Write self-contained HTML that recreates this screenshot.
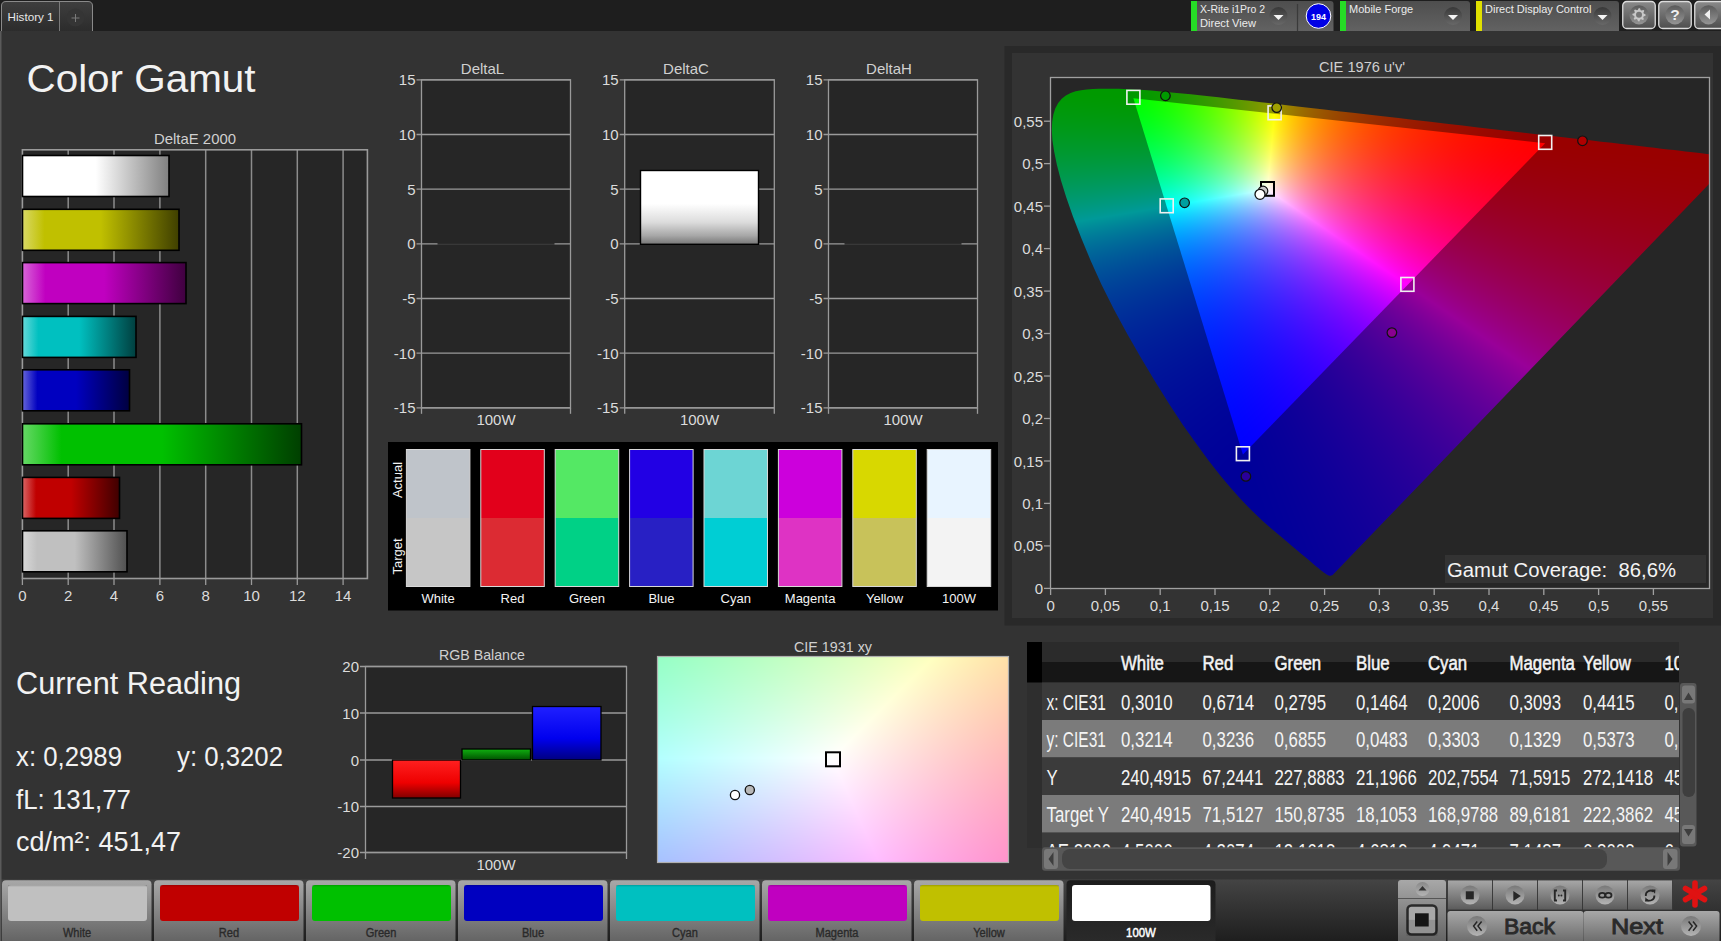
<!DOCTYPE html>
<html><head><meta charset="utf-8"><style>
html,body{margin:0;padding:0;width:1721px;height:941px;overflow:hidden;background:#333;}
svg{position:absolute;left:0;top:0;font-family:"Liberation Sans", sans-serif;}
canvas{position:absolute;}
</style></head><body>
<svg width="1721" height="941" viewBox="0 0 1721 941" style="z-index:0"><defs>
<linearGradient id="fb_out" x1="0" y1="0" x2="1" y2="0.3"><stop offset="0" stop-color="#009a30"/><stop offset="0.45" stop-color="#30009a"/><stop offset="1" stop-color="#990000"/></linearGradient>
<linearGradient id="fb_in" x1="0" y1="0" x2="0.6" y2="1"><stop offset="0" stop-color="#00ff00"/><stop offset="0.3" stop-color="#ffff00"/><stop offset="0.55" stop-color="#ff00ff"/><stop offset="1" stop-color="#0000ff"/></linearGradient>
<radialGradient id="fb_w" cx="0.45" cy="0.3" r="0.45"><stop offset="0" stop-color="#fff" stop-opacity="1"/><stop offset="1" stop-color="#fff" stop-opacity="0"/></radialGradient>
<linearGradient id="fb_xy" x1="0" y1="0" x2="1" y2="1"><stop offset="0" stop-color="#90ffc8"/><stop offset="0.5" stop-color="#fafaff"/><stop offset="1" stop-color="#ff9cc8"/></linearGradient>
<linearGradient id="tabg" x1="0" y1="0" x2="0" y2="1"><stop offset="0" stop-color="#3e3e3e"/><stop offset="1" stop-color="#2c2c2c"/></linearGradient>
<linearGradient id="devg" x1="0" y1="0" x2="0" y2="1"><stop offset="0" stop-color="#4e4e4e"/><stop offset="1" stop-color="#626262"/></linearGradient>
<linearGradient id="ddg" x1="0" y1="0" x2="0" y2="1"><stop offset="0" stop-color="#383838"/><stop offset="1" stop-color="#686868"/></linearGradient>
<linearGradient id="btng" x1="0" y1="0" x2="0" y2="1"><stop offset="0" stop-color="#8a8a8a"/><stop offset="1" stop-color="#4e4e4e"/></linearGradient>
<linearGradient id="ddg2" x1="0" y1="0" x2="0" y2="1"><stop offset="0" stop-color="#5a5a5a"/><stop offset="1" stop-color="#959595"/></linearGradient>
<linearGradient id="ddg3" x1="0" y1="0" x2="0" y2="1"><stop offset="0" stop-color="#787878"/><stop offset="1" stop-color="#b4b4b4"/></linearGradient>
<linearGradient id="ddg4" x1="0" y1="0" x2="0" y2="1"><stop offset="0" stop-color="#888"/><stop offset="1" stop-color="#b4b4b4"/></linearGradient>
<linearGradient id="botbg" x1="0" y1="0" x2="0" y2="1"><stop offset="0" stop-color="#444"/><stop offset="1" stop-color="#1e1e1e"/></linearGradient>
<linearGradient id="selbg" x1="0" y1="0" x2="0" y2="1"><stop offset="0" stop-color="#1c1c1c"/><stop offset="1" stop-color="#2c2c2c"/></linearGradient>
<linearGradient id="bbg" x1="0" y1="0" x2="0" y2="1"><stop offset="0" stop-color="#a8a8a8"/><stop offset="1" stop-color="#5a5a5a"/></linearGradient>
<linearGradient id="dcg" x1="0" y1="0" x2="0" y2="1"><stop offset="0" stop-color="#fff"/><stop offset="0.45" stop-color="#fff"/><stop offset="0.7" stop-color="#dcdcdc"/><stop offset="0.88" stop-color="#a8a8a8"/><stop offset="1" stop-color="#767676"/></linearGradient>
<linearGradient id="rb_r" x1="0" y1="0" x2="0" y2="1"><stop offset="0" stop-color="#ff2020"/><stop offset="0.6" stop-color="#ee0000"/><stop offset="1" stop-color="#800000"/></linearGradient>
<linearGradient id="rb_g" x1="0" y1="0" x2="0" y2="1"><stop offset="0" stop-color="#10b010"/><stop offset="1" stop-color="#005000"/></linearGradient>
<linearGradient id="rb_b" x1="0" y1="0" x2="0" y2="1"><stop offset="0" stop-color="#2020ff"/><stop offset="0.6" stop-color="#0000ee"/><stop offset="1" stop-color="#000080"/></linearGradient>
<linearGradient id="bar_w" x1="0" y1="0" x2="1" y2="0"><stop offset="0" stop-color="#ffffff"/><stop offset="0.14" stop-color="#ffffff"/><stop offset="0.5" stop-color="#ffffff"/><stop offset="1" stop-color="#808080"/></linearGradient>
<linearGradient id="bar_y" x1="0" y1="0" x2="1" y2="0"><stop offset="0" stop-color="#d9d966"/><stop offset="0.14" stop-color="#c0c000"/><stop offset="0.5" stop-color="#c0c000"/><stop offset="1" stop-color="#3f3f00"/></linearGradient>
<linearGradient id="bar_m" x1="0" y1="0" x2="1" y2="0"><stop offset="0" stop-color="#d966d9"/><stop offset="0.14" stop-color="#c000c0"/><stop offset="0.5" stop-color="#c000c0"/><stop offset="1" stop-color="#3f003f"/></linearGradient>
<linearGradient id="bar_c" x1="0" y1="0" x2="1" y2="0"><stop offset="0" stop-color="#66d9d9"/><stop offset="0.14" stop-color="#00c0c0"/><stop offset="0.5" stop-color="#00c0c0"/><stop offset="1" stop-color="#003f3f"/></linearGradient>
<linearGradient id="bar_b" x1="0" y1="0" x2="1" y2="0"><stop offset="0" stop-color="#6666d9"/><stop offset="0.14" stop-color="#0000c0"/><stop offset="0.5" stop-color="#0000c0"/><stop offset="1" stop-color="#00003f"/></linearGradient>
<linearGradient id="bar_g" x1="0" y1="0" x2="1" y2="0"><stop offset="0" stop-color="#66d966"/><stop offset="0.14" stop-color="#00c000"/><stop offset="0.5" stop-color="#00c000"/><stop offset="1" stop-color="#003f00"/></linearGradient>
<linearGradient id="bar_r" x1="0" y1="0" x2="1" y2="0"><stop offset="0" stop-color="#d96666"/><stop offset="0.14" stop-color="#c00000"/><stop offset="0.5" stop-color="#c00000"/><stop offset="1" stop-color="#3f0000"/></linearGradient>
<linearGradient id="bar_k" x1="0" y1="0" x2="1" y2="0"><stop offset="0" stop-color="#d9d9d9"/><stop offset="0.14" stop-color="#c0c0c0"/><stop offset="0.5" stop-color="#c0c0c0"/><stop offset="1" stop-color="#505050"/></linearGradient>
</defs><rect x="0" y="0" width="1721" height="31" fill="#1e1e1e"/><rect x="0" y="31" width="1721" height="848" fill="#333"/><path d="M1.5 31 V6 Q1.5 1.5 6 1.5 H88 Q92.5 1.5 92.5 6 V31" fill="url(#tabg)" stroke="#8a8a8a" stroke-width="1"/><line x1="59.5" y1="2" x2="59.5" y2="31" stroke="#7a7a7a" stroke-width="1"/><text x="7.6" y="21.3" font-size="11.5" fill="#e8e8e8" textLength="46" lengthAdjust="spacingAndGlyphs">History 1</text><circle cx="75.5" cy="17.5" r="9" fill="#353535"/><path d="M71.5 18 H79.5 M75.5 14 V22" stroke="#7a7a7a" stroke-width="1"/><path d="M1191 31 V1 H1330.5 Q1333.5 1 1333.5 4 V31 Z" fill="url(#devg)"/><rect x="1191" y="1" width="6" height="30" fill="#26dc26"/><text x="1200" y="12.5" font-size="11" fill="#ececec" textLength="65" lengthAdjust="spacingAndGlyphs">X-Rite i1Pro 2</text><text x="1200" y="26.5" font-size="11" fill="#ececec" textLength="56" lengthAdjust="spacingAndGlyphs">Direct View</text><circle cx="1278.5" cy="16" r="9" fill="url(#ddg)"/><path d="M1273.5 15 H1283.5 L1278.5 20 Z" fill="#f4f4f4"/><line x1="1297.5" y1="4" x2="1297.5" y2="31" stroke="#3a3a3a" stroke-width="1.2"/><circle cx="1318.5" cy="16" r="12.3" fill="#0000e6" stroke="#fff" stroke-width="1"/><text x="1318.5" y="19.5" font-size="9" fill="#fff" text-anchor="middle" font-weight="bold">194</text><path d="M1340 31 V1 H1467 Q1470 1 1470 4 V31 Z" fill="url(#devg)"/><rect x="1340" y="1" width="6" height="30" fill="#26dc26"/><text x="1349" y="12.5" font-size="11" fill="#ececec">Mobile Forge</text><circle cx="1453" cy="16" r="9" fill="url(#ddg)"/><path d="M1448 15 H1458 L1453 20 Z" fill="#f4f4f4"/><path d="M1476 31 V1 H1616 Q1619 1 1619 4 V31 Z" fill="url(#devg)"/><rect x="1476" y="1" width="6" height="30" fill="#e0e000"/><text x="1485" y="12.5" font-size="11" fill="#ececec">Direct Display Control</text><circle cx="1602.5" cy="16" r="9" fill="url(#ddg)"/><path d="M1597.5 15 H1607.5 L1602.5 20 Z" fill="#f4f4f4"/><rect x="1622.75" y="1.5" width="32.5" height="27" rx="4" fill="url(#btng)" stroke="#dcdcdc" stroke-width="1.3"/><circle cx="1639.0" cy="14.8" r="9.6" fill="url(#ddg2)"/><polygon points="1645.59,14.48 1645.53,15.77 1643.61,16.45 1643.20,17.32 1643.89,19.23 1642.93,20.10 1641.10,19.23 1640.19,19.55 1639.32,21.39 1638.03,21.33 1637.35,19.41 1636.48,19.00 1634.57,19.69 1633.70,18.73 1634.57,16.90 1634.25,15.99 1632.41,15.12 1632.47,13.83 1634.39,13.15 1634.80,12.28 1634.11,10.37 1635.07,9.50 1636.90,10.37 1637.81,10.05 1638.68,8.21 1639.97,8.27 1640.65,10.19 1641.52,10.60 1643.43,9.91 1644.30,10.87 1643.43,12.70 1643.75,13.61" fill="#c8c8c8"/><circle cx="1639.0" cy="14.8" r="3" fill="#767676"/><rect x="1658.75" y="1.5" width="32.5" height="27" rx="4" fill="url(#btng)" stroke="#dcdcdc" stroke-width="1.3"/><circle cx="1675.0" cy="14.8" r="9.6" fill="url(#ddg2)"/><text x="1675.0" y="20.3" font-size="15.5" font-weight="bold" fill="#f0f0f0" text-anchor="middle">?</text><rect x="1694.75" y="1.5" width="40" height="27" rx="4" fill="url(#btng)" stroke="#dcdcdc" stroke-width="1.3"/><circle cx="1708.5" cy="14.8" r="9.6" fill="url(#ddg2)"/><path d="M1704.5 14.5 L1710 9.5 V19.5 Z" fill="#f0f0f0"/><text x="26.5" y="92" font-size="38" fill="#f2f2f2" textLength="229" lengthAdjust="spacingAndGlyphs">Color Gamut</text><text x="195" y="144" font-size="15" fill="#d0d0d0" text-anchor="middle" textLength="82" lengthAdjust="spacingAndGlyphs">DeltaE 2000</text><rect x="22.4" y="149.8" width="345" height="428.7" fill="#262626"/><line x1="68.2" y1="149.8" x2="68.2" y2="578.5" stroke="#8c8c8c" stroke-width="1.5"/><line x1="114.0" y1="149.8" x2="114.0" y2="578.5" stroke="#8c8c8c" stroke-width="1.5"/><line x1="159.9" y1="149.8" x2="159.9" y2="578.5" stroke="#8c8c8c" stroke-width="1.5"/><line x1="205.7" y1="149.8" x2="205.7" y2="578.5" stroke="#8c8c8c" stroke-width="1.5"/><line x1="251.5" y1="149.8" x2="251.5" y2="578.5" stroke="#8c8c8c" stroke-width="1.5"/><line x1="297.3" y1="149.8" x2="297.3" y2="578.5" stroke="#8c8c8c" stroke-width="1.5"/><line x1="343.1" y1="149.8" x2="343.1" y2="578.5" stroke="#8c8c8c" stroke-width="1.5"/><rect x="22.4" y="149.8" width="345" height="428.7" fill="none" stroke="#9a9a9a" stroke-width="1.6"/><line x1="22.4" y1="578.5" x2="22.4" y2="585" stroke="#9a9a9a" stroke-width="1.3"/><text x="22.4" y="601" font-size="15" fill="#dcdcdc" text-anchor="middle">0</text><line x1="68.2" y1="578.5" x2="68.2" y2="585" stroke="#9a9a9a" stroke-width="1.3"/><text x="68.2" y="601" font-size="15" fill="#dcdcdc" text-anchor="middle">2</text><line x1="114.0" y1="578.5" x2="114.0" y2="585" stroke="#9a9a9a" stroke-width="1.3"/><text x="114.0" y="601" font-size="15" fill="#dcdcdc" text-anchor="middle">4</text><line x1="159.9" y1="578.5" x2="159.9" y2="585" stroke="#9a9a9a" stroke-width="1.3"/><text x="159.9" y="601" font-size="15" fill="#dcdcdc" text-anchor="middle">6</text><line x1="205.7" y1="578.5" x2="205.7" y2="585" stroke="#9a9a9a" stroke-width="1.3"/><text x="205.7" y="601" font-size="15" fill="#dcdcdc" text-anchor="middle">8</text><line x1="251.5" y1="578.5" x2="251.5" y2="585" stroke="#9a9a9a" stroke-width="1.3"/><text x="251.5" y="601" font-size="15" fill="#dcdcdc" text-anchor="middle">10</text><line x1="297.3" y1="578.5" x2="297.3" y2="585" stroke="#9a9a9a" stroke-width="1.3"/><text x="297.3" y="601" font-size="15" fill="#dcdcdc" text-anchor="middle">12</text><line x1="343.1" y1="578.5" x2="343.1" y2="585" stroke="#9a9a9a" stroke-width="1.3"/><text x="343.1" y="601" font-size="15" fill="#dcdcdc" text-anchor="middle">14</text><rect x="22.5" y="155.5" width="146.5" height="41" fill="url(#bar_w)" stroke="#000" stroke-width="1.6"/><rect x="22.5" y="209.3" width="156.5" height="41" fill="url(#bar_y)" stroke="#000" stroke-width="1.6"/><rect x="22.5" y="262.6" width="163.5" height="41" fill="url(#bar_m)" stroke="#000" stroke-width="1.6"/><rect x="22.5" y="316.4" width="113.5" height="41" fill="url(#bar_c)" stroke="#000" stroke-width="1.6"/><rect x="22.5" y="369.8" width="107.0" height="41" fill="url(#bar_b)" stroke="#000" stroke-width="1.6"/><rect x="22.5" y="423.8" width="279.0" height="41" fill="url(#bar_g)" stroke="#000" stroke-width="1.6"/><rect x="22.5" y="477.4" width="97.0" height="41" fill="url(#bar_r)" stroke="#000" stroke-width="1.6"/><rect x="22.5" y="530.8" width="104.5" height="41" fill="url(#bar_k)" stroke="#000" stroke-width="1.6"/><text x="482.5" y="73.5" font-size="15" fill="#d0d0d0" text-anchor="middle">DeltaL</text><rect x="421.5" y="79.8" width="149.0" height="328.0" fill="#262626"/><line x1="416.5" y1="79.8" x2="570.5" y2="79.8" stroke="#9a9a9a" stroke-width="1.3"/><text x="415.5" y="85.3" font-size="15" fill="#dcdcdc" text-anchor="end">15</text><line x1="416.5" y1="134.5" x2="570.5" y2="134.5" stroke="#9a9a9a" stroke-width="1.3"/><text x="415.5" y="140.0" font-size="15" fill="#dcdcdc" text-anchor="end">10</text><line x1="416.5" y1="189.1" x2="570.5" y2="189.1" stroke="#9a9a9a" stroke-width="1.3"/><text x="415.5" y="194.6" font-size="15" fill="#dcdcdc" text-anchor="end">5</text><line x1="416.5" y1="243.8" x2="570.5" y2="243.8" stroke="#9a9a9a" stroke-width="1.3"/><text x="415.5" y="249.3" font-size="15" fill="#dcdcdc" text-anchor="end">0</text><line x1="416.5" y1="298.5" x2="570.5" y2="298.5" stroke="#9a9a9a" stroke-width="1.3"/><text x="415.5" y="304.0" font-size="15" fill="#dcdcdc" text-anchor="end">-5</text><line x1="416.5" y1="353.2" x2="570.5" y2="353.2" stroke="#9a9a9a" stroke-width="1.3"/><text x="415.5" y="358.7" font-size="15" fill="#dcdcdc" text-anchor="end">-10</text><line x1="416.5" y1="407.8" x2="570.5" y2="407.8" stroke="#9a9a9a" stroke-width="1.3"/><text x="415.5" y="413.3" font-size="15" fill="#dcdcdc" text-anchor="end">-15</text><rect x="421.5" y="79.8" width="149.0" height="328.0" fill="none" stroke="#9a9a9a" stroke-width="1.3"/><line x1="421.5" y1="407.82" x2="421.5" y2="413.82" stroke="#9a9a9a" stroke-width="1.3"/><line x1="570.5" y1="407.82" x2="570.5" y2="413.82" stroke="#9a9a9a" stroke-width="1.3"/><text x="496.0" y="425" font-size="15" fill="#dcdcdc" text-anchor="middle">100W</text><line x1="437.5" y1="243.8" x2="554.5" y2="243.8" stroke="#111" stroke-width="1.3"/><text x="686" y="73.5" font-size="15" fill="#d0d0d0" text-anchor="middle">DeltaC</text><rect x="624.7" y="79.8" width="149.5999999999999" height="328.0" fill="#262626"/><line x1="619.7" y1="79.8" x2="774.3" y2="79.8" stroke="#9a9a9a" stroke-width="1.3"/><text x="618.7" y="85.3" font-size="15" fill="#dcdcdc" text-anchor="end">15</text><line x1="619.7" y1="134.5" x2="774.3" y2="134.5" stroke="#9a9a9a" stroke-width="1.3"/><text x="618.7" y="140.0" font-size="15" fill="#dcdcdc" text-anchor="end">10</text><line x1="619.7" y1="189.1" x2="774.3" y2="189.1" stroke="#9a9a9a" stroke-width="1.3"/><text x="618.7" y="194.6" font-size="15" fill="#dcdcdc" text-anchor="end">5</text><line x1="619.7" y1="243.8" x2="774.3" y2="243.8" stroke="#9a9a9a" stroke-width="1.3"/><text x="618.7" y="249.3" font-size="15" fill="#dcdcdc" text-anchor="end">0</text><line x1="619.7" y1="298.5" x2="774.3" y2="298.5" stroke="#9a9a9a" stroke-width="1.3"/><text x="618.7" y="304.0" font-size="15" fill="#dcdcdc" text-anchor="end">-5</text><line x1="619.7" y1="353.2" x2="774.3" y2="353.2" stroke="#9a9a9a" stroke-width="1.3"/><text x="618.7" y="358.7" font-size="15" fill="#dcdcdc" text-anchor="end">-10</text><line x1="619.7" y1="407.8" x2="774.3" y2="407.8" stroke="#9a9a9a" stroke-width="1.3"/><text x="618.7" y="413.3" font-size="15" fill="#dcdcdc" text-anchor="end">-15</text><rect x="624.7" y="79.8" width="149.5999999999999" height="328.0" fill="none" stroke="#9a9a9a" stroke-width="1.3"/><line x1="624.7" y1="407.82" x2="624.7" y2="413.82" stroke="#9a9a9a" stroke-width="1.3"/><line x1="774.3" y1="407.82" x2="774.3" y2="413.82" stroke="#9a9a9a" stroke-width="1.3"/><text x="699.5" y="425" font-size="15" fill="#dcdcdc" text-anchor="middle">100W</text><rect x="640.5" y="170.5" width="118" height="73.8" fill="url(#dcg)" stroke="#000" stroke-width="1.4"/><text x="889" y="73.5" font-size="15" fill="#d0d0d0" text-anchor="middle">DeltaH</text><rect x="828.5" y="79.8" width="149.0" height="328.0" fill="#262626"/><line x1="823.5" y1="79.8" x2="977.5" y2="79.8" stroke="#9a9a9a" stroke-width="1.3"/><text x="822.5" y="85.3" font-size="15" fill="#dcdcdc" text-anchor="end">15</text><line x1="823.5" y1="134.5" x2="977.5" y2="134.5" stroke="#9a9a9a" stroke-width="1.3"/><text x="822.5" y="140.0" font-size="15" fill="#dcdcdc" text-anchor="end">10</text><line x1="823.5" y1="189.1" x2="977.5" y2="189.1" stroke="#9a9a9a" stroke-width="1.3"/><text x="822.5" y="194.6" font-size="15" fill="#dcdcdc" text-anchor="end">5</text><line x1="823.5" y1="243.8" x2="977.5" y2="243.8" stroke="#9a9a9a" stroke-width="1.3"/><text x="822.5" y="249.3" font-size="15" fill="#dcdcdc" text-anchor="end">0</text><line x1="823.5" y1="298.5" x2="977.5" y2="298.5" stroke="#9a9a9a" stroke-width="1.3"/><text x="822.5" y="304.0" font-size="15" fill="#dcdcdc" text-anchor="end">-5</text><line x1="823.5" y1="353.2" x2="977.5" y2="353.2" stroke="#9a9a9a" stroke-width="1.3"/><text x="822.5" y="358.7" font-size="15" fill="#dcdcdc" text-anchor="end">-10</text><line x1="823.5" y1="407.8" x2="977.5" y2="407.8" stroke="#9a9a9a" stroke-width="1.3"/><text x="822.5" y="413.3" font-size="15" fill="#dcdcdc" text-anchor="end">-15</text><rect x="828.5" y="79.8" width="149.0" height="328.0" fill="none" stroke="#9a9a9a" stroke-width="1.3"/><line x1="828.5" y1="407.82" x2="828.5" y2="413.82" stroke="#9a9a9a" stroke-width="1.3"/><line x1="977.5" y1="407.82" x2="977.5" y2="413.82" stroke="#9a9a9a" stroke-width="1.3"/><text x="903.0" y="425" font-size="15" fill="#dcdcdc" text-anchor="middle">100W</text><line x1="844.5" y1="243.8" x2="961.5" y2="243.8" stroke="#111" stroke-width="1.3"/><rect x="388" y="442" width="610" height="168.5" fill="#000"/><rect x="406.4" y="449.5" width="63.5" height="68.5" fill="#bfc4ca"/><rect x="406.4" y="518" width="63.5" height="68.5" fill="#c6c6c6"/><rect x="406.4" y="449.5" width="63.5" height="137" fill="none" stroke="#d8d8d8" stroke-width="1"/><text x="438.1" y="603" font-size="13" fill="#f4f4f4" text-anchor="middle">White</text><rect x="480.8" y="449.5" width="63.5" height="68.5" fill="#e2001b"/><rect x="480.8" y="518" width="63.5" height="68.5" fill="#dc2b33"/><rect x="480.8" y="449.5" width="63.5" height="137" fill="none" stroke="#d8d8d8" stroke-width="1"/><text x="512.5" y="603" font-size="13" fill="#f4f4f4" text-anchor="middle">Red</text><rect x="555.2" y="449.5" width="63.5" height="68.5" fill="#54e864"/><rect x="555.2" y="518" width="63.5" height="68.5" fill="#00d186"/><rect x="555.2" y="449.5" width="63.5" height="137" fill="none" stroke="#d8d8d8" stroke-width="1"/><text x="587.0" y="603" font-size="13" fill="#f4f4f4" text-anchor="middle">Green</text><rect x="629.6" y="449.5" width="63.5" height="68.5" fill="#2200e4"/><rect x="629.6" y="518" width="63.5" height="68.5" fill="#2820c4"/><rect x="629.6" y="449.5" width="63.5" height="137" fill="none" stroke="#d8d8d8" stroke-width="1"/><text x="661.4" y="603" font-size="13" fill="#f4f4f4" text-anchor="middle">Blue</text><rect x="704.0" y="449.5" width="63.5" height="68.5" fill="#6dd5d4"/><rect x="704.0" y="518" width="63.5" height="68.5" fill="#00ced4"/><rect x="704.0" y="449.5" width="63.5" height="137" fill="none" stroke="#d8d8d8" stroke-width="1"/><text x="735.8" y="603" font-size="13" fill="#f4f4f4" text-anchor="middle">Cyan</text><rect x="778.4" y="449.5" width="63.5" height="68.5" fill="#cc00dc"/><rect x="778.4" y="518" width="63.5" height="68.5" fill="#de33c4"/><rect x="778.4" y="449.5" width="63.5" height="137" fill="none" stroke="#d8d8d8" stroke-width="1"/><text x="810.1" y="603" font-size="13" fill="#f4f4f4" text-anchor="middle">Magenta</text><rect x="852.8" y="449.5" width="63.5" height="68.5" fill="#d8d800"/><rect x="852.8" y="518" width="63.5" height="68.5" fill="#c8c25a"/><rect x="852.8" y="449.5" width="63.5" height="137" fill="none" stroke="#d8d8d8" stroke-width="1"/><text x="884.5" y="603" font-size="13" fill="#f4f4f4" text-anchor="middle">Yellow</text><rect x="927.2" y="449.5" width="63.5" height="68.5" fill="#e8f4ff"/><rect x="927.2" y="518" width="63.5" height="68.5" fill="#f3f3f3"/><rect x="927.2" y="449.5" width="63.5" height="137" fill="none" stroke="#d8d8d8" stroke-width="1"/><text x="959.0" y="603" font-size="13" fill="#f4f4f4" text-anchor="middle">100W</text><text x="0" y="0" font-size="13" fill="#f4f4f4" text-anchor="middle" transform="translate(402 480) rotate(-90)">Actual</text><text x="0" y="0" font-size="13" fill="#f4f4f4" text-anchor="middle" transform="translate(402 556.5) rotate(-90)">Target</text><rect x="1004.5" y="46" width="720" height="579.5" fill="#292929"/><rect x="1012" y="53" width="701" height="565" fill="#333"/><text x="1362" y="72" font-size="15" fill="#d0d0d0" text-anchor="middle" textLength="86" lengthAdjust="spacingAndGlyphs">CIE 1976 u'v'</text><rect x="1050.5" y="77.5" width="659" height="511" fill="#262626"/><svg x="1051" y="78" width="659" height="511" viewBox="1051 78 659 511" overflow="hidden"><polygon points="1332.4,575.1 1332.3,575.1 1332.2,575.1 1332.0,575.1 1331.9,575.2 1331.8,575.3 1331.6,575.2 1331.4,575.2 1331.3,575.4 1331.3,575.5 1331.2,575.6 1330.9,575.6 1330.7,575.7 1330.4,575.6 1330.1,575.6 1329.7,575.6 1329.4,575.6 1329.0,575.6 1328.5,575.5 1328.1,575.2 1327.2,574.8 1326.2,574.2 1325.0,573.3 1323.7,572.4 1322.3,571.3 1320.5,569.9 1318.5,568.3 1316.2,566.5 1313.8,564.4 1311.1,562.0 1308.1,559.4 1304.8,556.7 1301.1,553.6 1297.0,550.2 1292.5,546.5 1287.6,542.3 1282.3,537.8 1276.6,533.1 1270.3,527.7 1263.5,521.6 1256.4,514.9 1248.7,507.4 1240.4,498.7 1231.0,488.2 1220.3,475.4 1208.5,460.4 1196.1,443.6 1182.9,424.9 1169.3,404.2 1155.3,381.8 1141.2,358.2 1127.3,333.9 1113.9,309.2 1101.6,284.7 1090.7,260.8 1081.3,238.0 1073.0,216.8 1066.2,197.3 1060.8,180.0 1056.9,164.8 1054.1,151.5 1052.4,140.1 1051.8,130.3 1052.2,121.8 1053.4,114.5 1055.4,108.3 1058.2,103.1 1061.7,98.8 1065.9,95.5 1070.6,93.1 1075.7,91.3 1081.2,90.2 1086.9,89.5 1092.9,89.0 1099.1,88.8 1105.3,88.7 1111.5,88.7 1117.7,88.8 1124.1,89.0 1130.7,89.3 1137.3,89.7 1144.2,90.1 1151.2,90.6 1158.6,91.3 1166.1,92.0 1174.0,92.7 1182.3,93.5 1190.7,94.4 1199.6,95.3 1208.9,96.3 1218.4,97.4 1228.4,98.5 1238.8,99.7 1249.7,100.9 1261.0,102.2 1272.8,103.5 1284.9,105.0 1297.6,106.4 1310.7,107.9 1324.4,109.6 1338.3,111.2 1352.8,112.8 1367.6,114.6 1382.9,116.3 1398.5,118.1 1414.3,120.0 1430.3,121.8 1446.5,123.7 1462.4,125.5 1478.0,127.4 1493.3,129.2 1508.7,131.0 1523.9,132.7 1538.4,134.4 1552.2,136.0 1565.4,137.5 1578.0,139.0 1590.0,140.4 1601.2,141.6 1611.7,142.8 1621.5,144.0 1630.6,145.0 1639.2,146.1 1647.1,146.9 1654.4,147.8 1661.3,148.6 1667.9,149.4 1674.2,150.1 1680.0,150.8 1685.4,151.4 1690.4,152.0 1695.2,152.5 1699.4,153.1 1703.3,153.5 1706.6,153.9 1709.6,154.3 1712.4,154.6 1714.9,154.9 1717.2,155.1 1719.2,155.4 1721.0,155.5 1722.4,155.7 1723.6,155.9 1724.8,156.0 1725.8,156.1 1726.8,156.2 1727.8,156.3 1728.5,156.5 1729.3,156.6 1730.2,156.6 1731.0,156.7 1731.8,156.8 1732.5,156.9 1733.1,157.0 1733.6,157.0 1733.9,157.1 1734.1,157.1 1734.4,157.2 1734.6,157.2 1734.7,157.2 1734.8,157.2" fill="url(#fb_out)"/><polygon points="1545.2,143.2 1133.4,98.1 1242.9,454.5" fill="url(#fb_in)"/><polygon points="1545.2,143.2 1133.4,98.1 1242.9,454.5" fill="url(#fb_w)"/></svg><rect x="658" y="657" width="351" height="206" fill="url(#fb_xy)"/><line x1="1050.6" y1="588.5" x2="1050.6" y2="595" stroke="#a0a0a0" stroke-width="1.3"/><text x="1050.6" y="611" font-size="15" fill="#dcdcdc" text-anchor="middle">0</text><line x1="1044" y1="588.4" x2="1050.5" y2="588.4" stroke="#a0a0a0" stroke-width="1.3"/><text x="1043" y="593.9" font-size="15" fill="#dcdcdc" text-anchor="end">0</text><line x1="1105.4" y1="588.5" x2="1105.4" y2="595" stroke="#a0a0a0" stroke-width="1.3"/><text x="1105.4" y="611" font-size="15" fill="#dcdcdc" text-anchor="middle">0,05</text><line x1="1044" y1="545.9" x2="1050.5" y2="545.9" stroke="#a0a0a0" stroke-width="1.3"/><text x="1043" y="551.4" font-size="15" fill="#dcdcdc" text-anchor="end">0,05</text><line x1="1160.2" y1="588.5" x2="1160.2" y2="595" stroke="#a0a0a0" stroke-width="1.3"/><text x="1160.2" y="611" font-size="15" fill="#dcdcdc" text-anchor="middle">0,1</text><line x1="1044" y1="503.4" x2="1050.5" y2="503.4" stroke="#a0a0a0" stroke-width="1.3"/><text x="1043" y="508.9" font-size="15" fill="#dcdcdc" text-anchor="end">0,1</text><line x1="1215.0" y1="588.5" x2="1215.0" y2="595" stroke="#a0a0a0" stroke-width="1.3"/><text x="1215.0" y="611" font-size="15" fill="#dcdcdc" text-anchor="middle">0,15</text><line x1="1044" y1="461.0" x2="1050.5" y2="461.0" stroke="#a0a0a0" stroke-width="1.3"/><text x="1043" y="466.5" font-size="15" fill="#dcdcdc" text-anchor="end">0,15</text><line x1="1269.8" y1="588.5" x2="1269.8" y2="595" stroke="#a0a0a0" stroke-width="1.3"/><text x="1269.8" y="611" font-size="15" fill="#dcdcdc" text-anchor="middle">0,2</text><line x1="1044" y1="418.5" x2="1050.5" y2="418.5" stroke="#a0a0a0" stroke-width="1.3"/><text x="1043" y="424.0" font-size="15" fill="#dcdcdc" text-anchor="end">0,2</text><line x1="1324.6" y1="588.5" x2="1324.6" y2="595" stroke="#a0a0a0" stroke-width="1.3"/><text x="1324.6" y="611" font-size="15" fill="#dcdcdc" text-anchor="middle">0,25</text><line x1="1044" y1="376.0" x2="1050.5" y2="376.0" stroke="#a0a0a0" stroke-width="1.3"/><text x="1043" y="381.5" font-size="15" fill="#dcdcdc" text-anchor="end">0,25</text><line x1="1379.4" y1="588.5" x2="1379.4" y2="595" stroke="#a0a0a0" stroke-width="1.3"/><text x="1379.4" y="611" font-size="15" fill="#dcdcdc" text-anchor="middle">0,3</text><line x1="1044" y1="333.5" x2="1050.5" y2="333.5" stroke="#a0a0a0" stroke-width="1.3"/><text x="1043" y="339.0" font-size="15" fill="#dcdcdc" text-anchor="end">0,3</text><line x1="1434.2" y1="588.5" x2="1434.2" y2="595" stroke="#a0a0a0" stroke-width="1.3"/><text x="1434.2" y="611" font-size="15" fill="#dcdcdc" text-anchor="middle">0,35</text><line x1="1044" y1="291.1" x2="1050.5" y2="291.1" stroke="#a0a0a0" stroke-width="1.3"/><text x="1043" y="296.6" font-size="15" fill="#dcdcdc" text-anchor="end">0,35</text><line x1="1489.0" y1="588.5" x2="1489.0" y2="595" stroke="#a0a0a0" stroke-width="1.3"/><text x="1489.0" y="611" font-size="15" fill="#dcdcdc" text-anchor="middle">0,4</text><line x1="1044" y1="248.6" x2="1050.5" y2="248.6" stroke="#a0a0a0" stroke-width="1.3"/><text x="1043" y="254.1" font-size="15" fill="#dcdcdc" text-anchor="end">0,4</text><line x1="1543.8" y1="588.5" x2="1543.8" y2="595" stroke="#a0a0a0" stroke-width="1.3"/><text x="1543.8" y="611" font-size="15" fill="#dcdcdc" text-anchor="middle">0,45</text><line x1="1044" y1="206.1" x2="1050.5" y2="206.1" stroke="#a0a0a0" stroke-width="1.3"/><text x="1043" y="211.6" font-size="15" fill="#dcdcdc" text-anchor="end">0,45</text><line x1="1598.6" y1="588.5" x2="1598.6" y2="595" stroke="#a0a0a0" stroke-width="1.3"/><text x="1598.6" y="611" font-size="15" fill="#dcdcdc" text-anchor="middle">0,5</text><line x1="1044" y1="163.6" x2="1050.5" y2="163.6" stroke="#a0a0a0" stroke-width="1.3"/><text x="1043" y="169.1" font-size="15" fill="#dcdcdc" text-anchor="end">0,5</text><line x1="1653.4" y1="588.5" x2="1653.4" y2="595" stroke="#a0a0a0" stroke-width="1.3"/><text x="1653.4" y="611" font-size="15" fill="#dcdcdc" text-anchor="middle">0,55</text><line x1="1044" y1="121.2" x2="1050.5" y2="121.2" stroke="#a0a0a0" stroke-width="1.3"/><text x="1043" y="126.7" font-size="15" fill="#dcdcdc" text-anchor="end">0,55</text><text x="16" y="694" font-size="31" fill="#f2f2f2" textLength="225" lengthAdjust="spacingAndGlyphs">Current Reading</text><text x="16" y="766" font-size="27" fill="#f2f2f2" textLength="106" lengthAdjust="spacingAndGlyphs">x: 0,2989</text><text x="177" y="766" font-size="27" fill="#f2f2f2" textLength="106" lengthAdjust="spacingAndGlyphs">y: 0,3202</text><text x="16" y="808.5" font-size="27" fill="#f2f2f2" textLength="115" lengthAdjust="spacingAndGlyphs">fL: 131,77</text><text x="16" y="850.8" font-size="27" fill="#f2f2f2" textLength="165" lengthAdjust="spacingAndGlyphs">cd/m²: 451,47</text><text x="482" y="659.5" font-size="15" fill="#d0d0d0" text-anchor="middle" textLength="86" lengthAdjust="spacingAndGlyphs">RGB Balance</text><rect x="365.5" y="666.5" width="261" height="186" fill="#262626"/><line x1="360" y1="666.5" x2="626.5" y2="666.5" stroke="#9a9a9a" stroke-width="1.3"/><text x="359" y="672.0" font-size="15" fill="#dcdcdc" text-anchor="end">20</text><line x1="360" y1="713" x2="626.5" y2="713" stroke="#9a9a9a" stroke-width="1.3"/><text x="359" y="718.5" font-size="15" fill="#dcdcdc" text-anchor="end">10</text><line x1="360" y1="760" x2="626.5" y2="760" stroke="#9a9a9a" stroke-width="1.3"/><text x="359" y="765.5" font-size="15" fill="#dcdcdc" text-anchor="end">0</text><line x1="360" y1="806.5" x2="626.5" y2="806.5" stroke="#9a9a9a" stroke-width="1.3"/><text x="359" y="812.0" font-size="15" fill="#dcdcdc" text-anchor="end">-10</text><line x1="360" y1="852.5" x2="626.5" y2="852.5" stroke="#9a9a9a" stroke-width="1.3"/><text x="359" y="858.0" font-size="15" fill="#dcdcdc" text-anchor="end">-20</text><rect x="365.5" y="666.5" width="261" height="186" fill="none" stroke="#9a9a9a" stroke-width="1.3"/><line x1="365.5" y1="852.5" x2="365.5" y2="859" stroke="#9a9a9a" stroke-width="1.3"/><line x1="626.5" y1="852.5" x2="626.5" y2="859" stroke="#9a9a9a" stroke-width="1.3"/><text x="496" y="870" font-size="15" fill="#dcdcdc" text-anchor="middle">100W</text><rect x="392.5" y="760" width="68" height="38" fill="url(#rb_r)" stroke="#000" stroke-width="1.3"/><rect x="462" y="749" width="68.5" height="11" fill="url(#rb_g)" stroke="#000" stroke-width="1.3"/><rect x="532.5" y="706.5" width="68.5" height="53.5" fill="url(#rb_b)" stroke="#000" stroke-width="1.3"/><text x="833" y="652" font-size="15" fill="#d0d0d0" text-anchor="middle" textLength="78" lengthAdjust="spacingAndGlyphs">CIE 1931 xy</text><rect x="1027" y="642" width="652" height="206" fill="#2e2e2e"/><rect x="1042" y="642" width="637" height="20" fill="#2b2b2b"/><rect x="1042" y="662" width="637" height="20.5" fill="#161616"/><rect x="1027" y="642" width="15" height="40.5" fill="#000"/><clipPath id="tclip"><rect x="1027" y="642" width="652" height="206"/></clipPath><g clip-path="url(#tclip)"><text x="1121" y="669.7" font-size="21" fill="#f4f4f4" textLength="42.9" lengthAdjust="spacingAndGlyphs" stroke="#f4f4f4" stroke-width="0.55">White</text><text x="1202.5" y="669.7" font-size="21" fill="#f4f4f4" textLength="30.8" lengthAdjust="spacingAndGlyphs" stroke="#f4f4f4" stroke-width="0.55">Red</text><text x="1274.5" y="669.7" font-size="21" fill="#f4f4f4" textLength="46.7" lengthAdjust="spacingAndGlyphs" stroke="#f4f4f4" stroke-width="0.55">Green</text><text x="1356" y="669.7" font-size="21" fill="#f4f4f4" textLength="33.6" lengthAdjust="spacingAndGlyphs" stroke="#f4f4f4" stroke-width="0.55">Blue</text><text x="1428" y="669.7" font-size="21" fill="#f4f4f4" textLength="39.2" lengthAdjust="spacingAndGlyphs" stroke="#f4f4f4" stroke-width="0.55">Cyan</text><text x="1509.5" y="669.7" font-size="21" fill="#f4f4f4" textLength="65.4" lengthAdjust="spacingAndGlyphs" stroke="#f4f4f4" stroke-width="0.55">Magenta</text><text x="1583" y="669.7" font-size="21" fill="#f4f4f4" textLength="47.9" lengthAdjust="spacingAndGlyphs" stroke="#f4f4f4" stroke-width="0.55">Yellow</text><text x="1664.5" y="669.7" font-size="21" fill="#f4f4f4" textLength="43.9" lengthAdjust="spacingAndGlyphs" stroke="#f4f4f4" stroke-width="0.55">100W</text><rect x="1042" y="682.5" width="637" height="37.5" fill="#3b3b3b"/><text x="1046.5" y="709.5" font-size="22" fill="#f4f4f4" textLength="59.4" lengthAdjust="spacingAndGlyphs">x: CIE31</text><text x="1121" y="709.5" font-size="22" fill="#f4f4f4" textLength="51.5" lengthAdjust="spacingAndGlyphs">0,3010</text><text x="1202.5" y="709.5" font-size="22" fill="#f4f4f4" textLength="51.5" lengthAdjust="spacingAndGlyphs">0,6714</text><text x="1274.5" y="709.5" font-size="22" fill="#f4f4f4" textLength="51.5" lengthAdjust="spacingAndGlyphs">0,2795</text><text x="1356" y="709.5" font-size="22" fill="#f4f4f4" textLength="51.5" lengthAdjust="spacingAndGlyphs">0,1464</text><text x="1428" y="709.5" font-size="22" fill="#f4f4f4" textLength="51.5" lengthAdjust="spacingAndGlyphs">0,2006</text><text x="1509.5" y="709.5" font-size="22" fill="#f4f4f4" textLength="51.5" lengthAdjust="spacingAndGlyphs">0,3093</text><text x="1583" y="709.5" font-size="22" fill="#f4f4f4" textLength="51.5" lengthAdjust="spacingAndGlyphs">0,4415</text><text x="1664.5" y="709.5" font-size="22" fill="#f4f4f4" textLength="51.5" lengthAdjust="spacingAndGlyphs">0,3010</text><rect x="1042" y="720" width="637" height="37.5" fill="#7b7b7b"/><text x="1046.5" y="747" font-size="22" fill="#f4f4f4" textLength="59.4" lengthAdjust="spacingAndGlyphs">y: CIE31</text><text x="1121" y="747" font-size="22" fill="#f4f4f4" textLength="51.5" lengthAdjust="spacingAndGlyphs">0,3214</text><text x="1202.5" y="747" font-size="22" fill="#f4f4f4" textLength="51.5" lengthAdjust="spacingAndGlyphs">0,3236</text><text x="1274.5" y="747" font-size="22" fill="#f4f4f4" textLength="51.5" lengthAdjust="spacingAndGlyphs">0,6855</text><text x="1356" y="747" font-size="22" fill="#f4f4f4" textLength="51.5" lengthAdjust="spacingAndGlyphs">0,0483</text><text x="1428" y="747" font-size="22" fill="#f4f4f4" textLength="51.5" lengthAdjust="spacingAndGlyphs">0,3303</text><text x="1509.5" y="747" font-size="22" fill="#f4f4f4" textLength="51.5" lengthAdjust="spacingAndGlyphs">0,1329</text><text x="1583" y="747" font-size="22" fill="#f4f4f4" textLength="51.5" lengthAdjust="spacingAndGlyphs">0,5373</text><text x="1664.5" y="747" font-size="22" fill="#f4f4f4" textLength="51.5" lengthAdjust="spacingAndGlyphs">0,3214</text><rect x="1042" y="757.5" width="637" height="37.5" fill="#3b3b3b"/><text x="1046.5" y="784.5" font-size="22" fill="#f4f4f4" textLength="11.2" lengthAdjust="spacingAndGlyphs">Y</text><text x="1121" y="784.5" font-size="22" fill="#f4f4f4" textLength="70.2" lengthAdjust="spacingAndGlyphs">240,4915</text><text x="1202.5" y="784.5" font-size="22" fill="#f4f4f4" textLength="60.8" lengthAdjust="spacingAndGlyphs">67,2441</text><text x="1274.5" y="784.5" font-size="22" fill="#f4f4f4" textLength="70.2" lengthAdjust="spacingAndGlyphs">227,8883</text><text x="1356" y="784.5" font-size="22" fill="#f4f4f4" textLength="60.8" lengthAdjust="spacingAndGlyphs">21,1966</text><text x="1428" y="784.5" font-size="22" fill="#f4f4f4" textLength="70.2" lengthAdjust="spacingAndGlyphs">202,7554</text><text x="1509.5" y="784.5" font-size="22" fill="#f4f4f4" textLength="60.8" lengthAdjust="spacingAndGlyphs">71,5915</text><text x="1583" y="784.5" font-size="22" fill="#f4f4f4" textLength="70.2" lengthAdjust="spacingAndGlyphs">272,1418</text><text x="1664.5" y="784.5" font-size="22" fill="#f4f4f4" textLength="51.5" lengthAdjust="spacingAndGlyphs">451,47</text><rect x="1042" y="795" width="637" height="37.5" fill="#7b7b7b"/><text x="1046.5" y="822" font-size="22" fill="#f4f4f4" textLength="62.4" lengthAdjust="spacingAndGlyphs">Target Y</text><text x="1121" y="822" font-size="22" fill="#f4f4f4" textLength="70.2" lengthAdjust="spacingAndGlyphs">240,4915</text><text x="1202.5" y="822" font-size="22" fill="#f4f4f4" textLength="60.8" lengthAdjust="spacingAndGlyphs">71,5127</text><text x="1274.5" y="822" font-size="22" fill="#f4f4f4" textLength="70.2" lengthAdjust="spacingAndGlyphs">150,8735</text><text x="1356" y="822" font-size="22" fill="#f4f4f4" textLength="60.8" lengthAdjust="spacingAndGlyphs">18,1053</text><text x="1428" y="822" font-size="22" fill="#f4f4f4" textLength="70.2" lengthAdjust="spacingAndGlyphs">168,9788</text><text x="1509.5" y="822" font-size="22" fill="#f4f4f4" textLength="60.8" lengthAdjust="spacingAndGlyphs">89,6181</text><text x="1583" y="822" font-size="22" fill="#f4f4f4" textLength="70.2" lengthAdjust="spacingAndGlyphs">222,3862</text><text x="1664.5" y="822" font-size="22" fill="#f4f4f4" textLength="51.5" lengthAdjust="spacingAndGlyphs">451,47</text><rect x="1042" y="833" width="637" height="37.5" fill="#3b3b3b"/><text x="1046.5" y="858.5" font-size="22" fill="#f4f4f4" textLength="64.6" lengthAdjust="spacingAndGlyphs">ΔE 2000</text><text x="1121" y="858.5" font-size="22" fill="#f4f4f4" textLength="51.5" lengthAdjust="spacingAndGlyphs">4,5006</text><text x="1202.5" y="858.5" font-size="22" fill="#f4f4f4" textLength="51.5" lengthAdjust="spacingAndGlyphs">4,2074</text><text x="1274.5" y="858.5" font-size="22" fill="#f4f4f4" textLength="60.8" lengthAdjust="spacingAndGlyphs">12,1618</text><text x="1356" y="858.5" font-size="22" fill="#f4f4f4" textLength="51.5" lengthAdjust="spacingAndGlyphs">4,6819</text><text x="1428" y="858.5" font-size="22" fill="#f4f4f4" textLength="51.5" lengthAdjust="spacingAndGlyphs">4,9471</text><text x="1509.5" y="858.5" font-size="22" fill="#f4f4f4" textLength="51.5" lengthAdjust="spacingAndGlyphs">7,1487</text><text x="1583" y="858.5" font-size="22" fill="#f4f4f4" textLength="51.5" lengthAdjust="spacingAndGlyphs">6,8008</text><text x="1664.5" y="858.5" font-size="22" fill="#f4f4f4" textLength="23.4" lengthAdjust="spacingAndGlyphs">6,4</text></g><rect x="1680" y="683" width="16.5" height="163.5" rx="3" fill="#585858"/><rect x="1682" y="685.5" width="13" height="18" rx="3" fill="#787878"/><path d="M1684 700 L1688.5 692.5 L1693 700 Z" fill="#3e3e3e"/><rect x="1682.5" y="708" width="12.5" height="89" rx="6" fill="#3e3e3e"/><rect x="1682" y="825" width="13" height="19" rx="3" fill="#787878"/><path d="M1684 829 L1693 829 L1688.5 836.5 Z" fill="#3e3e3e"/><rect x="1042" y="847.3" width="638" height="23.5" rx="3" fill="#585858"/><rect x="1044" y="849" width="14" height="20" rx="3" fill="#787878"/><path d="M1048.5 859 L1053.5 852 V866 Z" fill="#3e3e3e"/><rect x="1663" y="849" width="14.5" height="20" rx="3" fill="#787878"/><path d="M1672.5 859 L1667.5 852 V866 Z" fill="#3e3e3e"/><rect x="1062" y="849" width="545" height="20" rx="8" fill="#444"/><rect x="0" y="879.5" width="1721" height="62" fill="url(#botbg)"/><rect x="2" y="880.2" width="149.5" height="70" rx="4" fill="url(#bbg)"/><rect x="8" y="885.1" width="139" height="35.8" rx="3" fill="#c0c0c0"/><text x="77" y="936.5" font-size="12" fill="#2a2a2a" text-anchor="middle" textLength="28.2" lengthAdjust="spacingAndGlyphs" stroke="#2a2a2a" stroke-width="0.35">White</text><rect x="154" y="880.2" width="149.5" height="70" rx="4" fill="url(#bbg)"/><rect x="160" y="885.1" width="139" height="35.8" rx="3" fill="#c00000"/><text x="229" y="936.5" font-size="12" fill="#2a2a2a" text-anchor="middle" textLength="20.3" lengthAdjust="spacingAndGlyphs" stroke="#2a2a2a" stroke-width="0.35">Red</text><rect x="306" y="880.2" width="149.5" height="70" rx="4" fill="url(#bbg)"/><rect x="312" y="885.1" width="139" height="35.8" rx="3" fill="#00c000"/><text x="381" y="936.5" font-size="12" fill="#2a2a2a" text-anchor="middle" textLength="30.7" lengthAdjust="spacingAndGlyphs" stroke="#2a2a2a" stroke-width="0.35">Green</text><rect x="458" y="880.2" width="149.5" height="70" rx="4" fill="url(#bbg)"/><rect x="464" y="885.1" width="139" height="35.8" rx="3" fill="#0000c0"/><text x="533" y="936.5" font-size="12" fill="#2a2a2a" text-anchor="middle" textLength="22.1" lengthAdjust="spacingAndGlyphs" stroke="#2a2a2a" stroke-width="0.35">Blue</text><rect x="610" y="880.2" width="149.5" height="70" rx="4" fill="url(#bbg)"/><rect x="616" y="885.1" width="139" height="35.8" rx="3" fill="#00c0c0"/><text x="685" y="936.5" font-size="12" fill="#2a2a2a" text-anchor="middle" textLength="25.8" lengthAdjust="spacingAndGlyphs" stroke="#2a2a2a" stroke-width="0.35">Cyan</text><rect x="762" y="880.2" width="149.5" height="70" rx="4" fill="url(#bbg)"/><rect x="768" y="885.1" width="139" height="35.8" rx="3" fill="#c000c0"/><text x="837" y="936.5" font-size="12" fill="#2a2a2a" text-anchor="middle" textLength="43.0" lengthAdjust="spacingAndGlyphs" stroke="#2a2a2a" stroke-width="0.35">Magenta</text><rect x="914" y="880.2" width="149.5" height="70" rx="4" fill="url(#bbg)"/><rect x="920" y="885.1" width="139" height="35.8" rx="3" fill="#c0c000"/><text x="989" y="936.5" font-size="12" fill="#2a2a2a" text-anchor="middle" textLength="31.5" lengthAdjust="spacingAndGlyphs" stroke="#2a2a2a" stroke-width="0.35">Yellow</text><rect x="1066.5" y="880.2" width="149" height="70" rx="4" fill="url(#selbg)"/><rect x="1072" y="885.1" width="138.5" height="35.8" rx="3" fill="#fff"/><text x="1141" y="936.5" font-size="12" fill="#fff" text-anchor="middle" textLength="29.8" lengthAdjust="spacingAndGlyphs" stroke="#fff" stroke-width="0.45">100W</text><rect x="1398" y="880" width="48" height="70" rx="3" fill="url(#bbg)"/><line x1="1398" y1="898.5" x2="1446" y2="898.5" stroke="#555" stroke-width="1"/><circle cx="1422.5" cy="889" r="7" fill="url(#ddg4)"/><path d="M1418.5 890.5 L1422.5 886 L1426.5 890.5 Z" fill="#333"/><rect x="1407.5" y="905.5" width="29" height="29" rx="4" fill="#a8a8a8" stroke="#2a2a2a" stroke-width="2.5"/><rect x="1406.5" y="919.8" width="31" height="16" rx="0" fill="#000" opacity="0.13"/><rect x="1415" y="913.3" width="13.7" height="13.2" fill="#151515"/><rect x="1447.5" y="880" width="45" height="30" fill="url(#bbg)" stroke="#333" stroke-width="0.8"/><circle cx="1470.0" cy="895" r="9.5" fill="url(#ddg3)"/><rect x="1492.5" y="880" width="45" height="30" fill="url(#bbg)" stroke="#333" stroke-width="0.8"/><circle cx="1515.0" cy="895" r="9.5" fill="url(#ddg3)"/><rect x="1537.5" y="880" width="45" height="30" fill="url(#bbg)" stroke="#333" stroke-width="0.8"/><circle cx="1560.0" cy="895" r="9.5" fill="url(#ddg3)"/><rect x="1582.5" y="880" width="45" height="30" fill="url(#bbg)" stroke="#333" stroke-width="0.8"/><circle cx="1605.0" cy="895" r="9.5" fill="url(#ddg3)"/><rect x="1627.5" y="880" width="45" height="30" fill="url(#bbg)" stroke="#333" stroke-width="0.8"/><circle cx="1650.0" cy="895" r="9.5" fill="url(#ddg3)"/><rect x="1465.8" y="891.3" width="8" height="8" fill="#262626"/><path d="M1513.3 891 L1520.8 896 L1513.3 901 Z" fill="#262626"/><path d="M1557 890.5 h-2.2 v10 h2.2 M1563 890.5 h2.2 v10 h-2.2" stroke="#262626" stroke-width="1.9" fill="none"/><circle cx="1558.8" cy="895.5" r="0.95" fill="#262626"/><circle cx="1561.4" cy="895.5" r="0.95" fill="#262626"/><ellipse cx="1602.2" cy="895.3" rx="3.1" ry="2.4" stroke="#262626" stroke-width="1.8" fill="none"/><ellipse cx="1608.4" cy="895.3" rx="3.1" ry="2.4" stroke="#262626" stroke-width="1.8" fill="none"/><path d="M1645.8 896 A4.8 4.8 0 0 1 1653.5 891.6 M1654.4 895.5 A4.8 4.8 0 0 1 1646.7 899.6" stroke="#262626" stroke-width="1.8" fill="none"/><path d="M1651.5 889.5 L1655.5 889.5 L1655 893.8 Z M1649 901.5 L1645 901.5 L1645.5 897.2 Z" fill="#262626"/><rect x="1447.5" y="911" width="136" height="40" rx="3" fill="url(#bbg)"/><rect x="1583.5" y="911" width="136" height="40" rx="3" fill="url(#bbg)"/><circle cx="1477" cy="926" r="10" fill="url(#ddg3)"/><circle cx="1691" cy="926" r="10" fill="url(#ddg3)"/><path d="M1477.2 921.5 l-3.6 4.6 l3.6 4.6 M1481.6 921.5 l-3.6 4.6 l3.6 4.6" stroke="#262626" stroke-width="1.5" fill="none"/><path d="M1688.6 921.5 l3.6 4.6 l-3.6 4.6 M1693 921.5 l3.6 4.6 l-3.6 4.6" stroke="#262626" stroke-width="1.5" fill="none"/><text x="1504" y="933.5" font-size="22" fill="#2a2a2a" textLength="51" lengthAdjust="spacingAndGlyphs" stroke="#2a2a2a" stroke-width="0.9">Back</text><text x="1611" y="933.5" font-size="22" fill="#2a2a2a" textLength="52" lengthAdjust="spacingAndGlyphs" stroke="#2a2a2a" stroke-width="0.9">Next</text><line x1="1695.00" y1="883.00" x2="1695.00" y2="905.00" stroke="#e01212" stroke-width="5.6" stroke-linecap="round"/><line x1="1704.53" y1="888.50" x2="1685.47" y2="899.50" stroke="#e01212" stroke-width="5.6" stroke-linecap="round"/><line x1="1704.53" y1="899.50" x2="1685.47" y2="888.50" stroke="#e01212" stroke-width="5.6" stroke-linecap="round"/><rect x="0" y="31" width="1.5" height="910" fill="#5a5a5a"/><rect x="8" y="885.1" width="139" height="1.2" fill="#000" opacity="0.15"/><rect x="160" y="885.1" width="139" height="1.2" fill="#000" opacity="0.15"/><rect x="312" y="885.1" width="139" height="1.2" fill="#000" opacity="0.15"/><rect x="464" y="885.1" width="139" height="1.2" fill="#000" opacity="0.15"/><rect x="616" y="885.1" width="139" height="1.2" fill="#000" opacity="0.15"/><rect x="768" y="885.1" width="139" height="1.2" fill="#000" opacity="0.15"/><rect x="920" y="885.1" width="139" height="1.2" fill="#000" opacity="0.15"/></svg>
<canvas id="uv" width="659" height="511" style="left:1051px;top:78px;width:659px;height:511px;z-index:1"></canvas>
<canvas id="xy" width="351" height="206" style="left:658px;top:657px;width:351px;height:206px;z-index:1"></canvas>
<svg width="1721" height="941" viewBox="0 0 1721 941" style="z-index:2"><rect x="1050.5" y="77.5" width="659" height="511" fill="none" stroke="#a0a0a0" stroke-width="1.3"/><rect x="1445" y="555" width="261" height="28" fill="#333"/><text x="1447" y="577" font-size="20" fill="#f4f4f4" textLength="229" lengthAdjust="spacingAndGlyphs">Gamut Coverage:&#160; 86,6%</text><rect x="1538.7" y="135.5" width="13.0" height="13.8" fill="none" stroke="#f0f0f0" stroke-width="1.6"/><rect x="1126.9" y="90.4" width="13.0" height="13.8" fill="none" stroke="#f0f0f0" stroke-width="1.6"/><rect x="1236.4" y="446.8" width="13.0" height="13.8" fill="none" stroke="#f0f0f0" stroke-width="1.6"/><rect x="1160.2" y="198.9" width="13.0" height="13.8" fill="none" stroke="#f0f0f0" stroke-width="1.6"/><rect x="1400.9" y="277.5" width="13.0" height="13.8" fill="none" stroke="#f0f0f0" stroke-width="1.6"/><rect x="1268.1" y="105.9" width="13.0" height="13.8" fill="none" stroke="#f0f0f0" stroke-width="1.6"/><rect x="1261.0" y="182.0" width="13.0" height="13.8" fill="none" stroke="#000" stroke-width="2"/><circle cx="1582.5" cy="140.8" r="4.8" fill="#b00000" stroke="#111" stroke-width="1.2"/><circle cx="1165.4" cy="95.8" r="4.8" fill="#009a00" stroke="#111" stroke-width="1.2"/><circle cx="1245.9" cy="476.4" r="4.8" fill="#2a009a" stroke="#111" stroke-width="1.2"/><circle cx="1184.6" cy="202.8" r="4.8" fill="#00a0a0" stroke="#111" stroke-width="1.2"/><circle cx="1391.9" cy="332.6" r="4.8" fill="#8a0090" stroke="#111" stroke-width="1.2"/><circle cx="1276.7" cy="107.6" r="4.8" fill="#a0a000" stroke="#111" stroke-width="1.2"/><circle cx="1263" cy="191" r="4.8" fill="#c8c8c8" stroke="#111" stroke-width="1.2"/><circle cx="1260" cy="194.3" r="5" fill="#fff" stroke="#111" stroke-width="1.3"/><rect x="657.5" y="656.5" width="351" height="206" fill="none" stroke="#b0b0b0" stroke-width="1.2"/><rect x="826" y="752.3" width="14" height="14" fill="none" stroke="#000" stroke-width="2"/><circle cx="749.8" cy="790.0" r="4.6" fill="#b8b8b8" stroke="#111" stroke-width="1.3"/><circle cx="735.0" cy="795.0" r="4.6" fill="#fff" stroke="#111" stroke-width="1.3"/></svg>
<script>
(function(){
var L=[0.2569,0.0165,0.2568,0.0165,0.2567,0.0165,0.2566,0.0165,0.2565,0.0164,0.2564,0.0163,0.2562,0.0164,0.2560,0.0164,0.2559,0.0162,0.2559,0.0161,0.2558,0.0159,0.2556,0.0159,0.2554,0.0158,0.2551,0.0159,0.2548,0.0159,0.2545,0.0159,0.2542,0.0159,0.2538,0.0160,0.2534,0.0161,0.2530,0.0164,0.2522,0.0169,0.2513,0.0176,0.2502,0.0186,0.2490,0.0197,0.2477,0.0210,0.2461,0.0226,0.2443,0.0245,0.2422,0.0266,0.2400,0.0291,0.2375,0.0319,0.2348,0.0349,0.2318,0.0381,0.2284,0.0417,0.2247,0.0457,0.2206,0.0501,0.2161,0.0550,0.2113,0.0602,0.2061,0.0658,0.2004,0.0721,0.1942,0.0792,0.1877,0.0871,0.1807,0.0959,0.1731,0.1061,0.1646,0.1184,0.1548,0.1334,0.1441,0.1510,0.1328,0.1707,0.1208,0.1926,0.1084,0.2169,0.0956,0.2432,0.0828,0.2708,0.0701,0.2993,0.0579,0.3282,0.0467,0.3570,0.0368,0.3850,0.0282,0.4117,0.0207,0.4366,0.0145,0.4594,0.0096,0.4797,0.0060,0.4975,0.0035,0.5131,0.0019,0.5265,0.0014,0.5380,0.0017,0.5480,0.0028,0.5565,0.0046,0.5638,0.0072,0.5699,0.0104,0.5749,0.0142,0.5788,0.0185,0.5816,0.0231,0.5837,0.0281,0.5850,0.0333,0.5858,0.0388,0.5864,0.0444,0.5866,0.0501,0.5868,0.0557,0.5867,0.0614,0.5866,0.0672,0.5864,0.0732,0.5861,0.0792,0.5856,0.0855,0.5851,0.0919,0.5845,0.0986,0.5837,0.1055,0.5829,0.1127,0.5821,0.1202,0.5811,0.1279,0.5801,0.1360,0.5790,0.1444,0.5778,0.1531,0.5766,0.1622,0.5753,0.1717,0.5739,0.1816,0.5725,0.1919,0.5709,0.2026,0.5694,0.2137,0.5677,0.2252,0.5660,0.2372,0.5642,0.2496,0.5623,0.2623,0.5604,0.2755,0.5585,0.2890,0.5564,0.3029,0.5544,0.3171,0.5523,0.3315,0.5501,0.3461,0.5479,0.3608,0.5457,0.3753,0.5436,0.3895,0.5414,0.4035,0.5393,0.4175,0.5372,0.4313,0.5352,0.4445,0.5332,0.4571,0.5313,0.4691,0.5296,0.4806,0.5278,0.4915,0.5262,0.5017,0.5247,0.5113,0.5233,0.5202,0.5219,0.5285,0.5207,0.5363,0.5195,0.5435,0.5185,0.5502,0.5175,0.5565,0.5165,0.5625,0.5156,0.5682,0.5148,0.5735,0.5140,0.5784,0.5132,0.5830,0.5125,0.5873,0.5119,0.5912,0.5113,0.5947,0.5108,0.5977,0.5103,0.6005,0.5099,0.6030,0.5095,0.6053,0.5092,0.6074,0.5089,0.6092,0.5086,0.6108,0.5084,0.6121,0.5082,0.6132,0.5080,0.6143,0.5079,0.6152,0.5077,0.6161,0.5076,0.6170,0.5075,0.6177,0.5073,0.6184,0.5072,0.6192,0.5071,0.6199,0.5070,0.6207,0.5069,0.6213,0.5068,0.6219,0.5067,0.6223,0.5067,0.6226,0.5066,0.6228,0.5066,0.6230,0.5065,0.6232,0.5065,0.6233,0.5065,0.6234,0.5065];
var Mi=[[2.041588,-0.565007,-0.344731],[-0.969244,1.875968,0.041555],[0.013444,-0.118362,1.015175]];
var T=[[0.450704,0.522887],[0.075676,0.575676],[0.175439,0.157895]];
function inPoly(P,x,y){var c=false,n=P.length/2;for(var i=0,j=n-1;i<n;j=i++){var xi=P[2*i],yi=P[2*i+1],xj=P[2*j],yj=P[2*j+1];if(((yi>y)!=(yj>y))&&(x<(xj-xi)*(y-yi)/(yj-yi)+xi))c=!c;}return c;}
var TP=[T[0][0],T[0][1],T[1][0],T[1][1],T[2][0],T[2][1]];
function col(x,y,g){var X=x/y,Y=1,Z=(1-x-y)/y;var r=Mi[0][0]*X+Mi[0][1]*Y+Mi[0][2]*Z,gg=Mi[1][0]*X+Mi[1][1]*Y+Mi[1][2]*Z,b=Mi[2][0]*X+Mi[2][1]*Y+Mi[2][2]*Z;
r=Math.max(r,0);gg=Math.max(gg,0);b=Math.max(b,0);var m=Math.max(r,gg,b);r/=m;gg/=m;b/=m;return [Math.pow(r,g),Math.pow(gg,g),Math.pow(b,g)];}
var c=document.getElementById('uv'),ctx=c.getContext('2d'),W=c.width,H=c.height;
var oa=document.createElement('canvas');oa.width=W;oa.height=H;var ob=document.createElement('canvas');ob.width=W;ob.height=H;
var xa=oa.getContext('2d'),xb=ob.getContext('2d');var ia=xa.createImageData(W,H),ib=xb.createImageData(W,H),da=ia.data,db=ib.data;
for(var j=0;j<H;j++)for(var i=0;i<W;i++){var u=(1051+i+0.5-1050.3)/1098.0,v=(589.2-(78+j+0.5))/853.0;var k=(j*W+i)*4;
 var den=6*u-16*v+12,x=9*u/den,y=4*v/den;if(y<=0.0005)y=0.0005;var cc=col(x,y,1.25);
 da[k]=cc[0]*255;da[k+1]=cc[1]*255;da[k+2]=cc[2]*255;da[k+3]=255;db[k]=cc[0]*153;db[k+1]=cc[1]*153;db[k+2]=cc[2]*153;db[k+3]=255;}
xa.putImageData(ia,0,0);xb.putImageData(ib,0,0);
function P(u,v){return [u*1098.0+1050.3-1051,589.2-v*853.0-78];}
ctx.fillStyle='#262626';ctx.fillRect(0,0,W,H);
ctx.beginPath();for(var n=0;n<L.length/2;n++){var p=P(L[2*n],L[2*n+1]);if(n==0)ctx.moveTo(p[0],p[1]);else ctx.lineTo(p[0],p[1]);}ctx.closePath();
ctx.fillStyle=ctx.createPattern(ob,'no-repeat');ctx.fill();
ctx.beginPath();for(var n=0;n<3;n++){var p=P(T[n][0],T[n][1]);if(n==0)ctx.moveTo(p[0],p[1]);else ctx.lineTo(p[0],p[1]);}ctx.closePath();
ctx.fillStyle=ctx.createPattern(oa,'no-repeat');ctx.fill();
var c2=document.getElementById('xy'),x2=c2.getContext('2d'),W2=c2.width,H2=c2.height,im2=x2.createImageData(W2,H2),d2=im2.data;
for(var j=0;j<H2;j++)for(var i=0;i<W2;i++){var x=0.3127+(658+i+0.5-832)/7029,y=0.329-(657+j+0.5-758)/4205;var cc=col(x,y,1.3);var k=(j*W2+i)*4;
 d2[k]=cc[0]*255;d2[k+1]=cc[1]*255;d2[k+2]=cc[2]*255;d2[k+3]=255;}
x2.putImageData(im2,0,0);
})();
</script>
</body></html>
